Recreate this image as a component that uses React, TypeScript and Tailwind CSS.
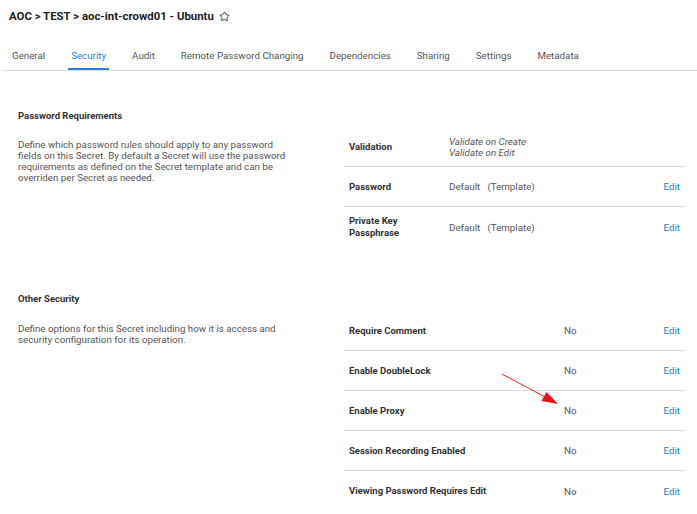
import React from "react";
import { Star } from "lucide-react";

const tabs = ["General", "Security", "Audit", "Remote Password Changing", "Dependencies", "Sharing", "Settings", "Metadata"];

function Row({ label, children, last, labelW, edit = true }: { label: React.ReactNode; children?: React.ReactNode; last?: boolean; labelW: string; edit?: boolean }) {
  return (
    <div className={`flex h-[40px] items-center pl-[5px] pr-[5px] ${last ? "" : "border-b border-[#dcdcdc]"}`}>
      <div className={`${labelW} shrink-0 text-[9.5px] font-bold leading-[12px] text-[#333]`}>{label}</div>
      <div className="flex-1 text-[9.75px] leading-[11px] text-[#555]">{children}</div>
      {edit && <div className="text-[9.75px] leading-[11px] text-[#2a7fd4]">Edit</div>}
    </div>
  );
}

export default function App() {
  return (
    <div className="relative h-[514px] w-[697px] overflow-hidden bg-white font-['Roboto',sans-serif]">
      <div className="flex h-[33px] items-center pl-[9px] text-[11.4px] font-bold text-[#222]">
        <span>AOC &gt; TEST &gt; aoc-int-crowd01 - Ubuntu</span>
        <Star size={11} strokeWidth={2} className="ml-[5px] text-[#333]" />
      </div>
      <div className="ml-[3px] flex h-[38px] gap-[20px] border-b border-[#e0e0e0] pl-[6px]">
        {tabs.map((t) => (
          <div
            key={t}
            className={`flex flex-col justify-end border-b-2 px-[3px] pb-[5px] text-[9.75px] leading-[14px] ${t === "Security" ? "border-[#2a7fd4] text-[#2a7fd4]" : "border-transparent text-[#555]"}`}
          >
            {t}
          </div>
        ))}
      </div>

      <div className="pl-[18px] pr-[12px]">
        <div className="mt-[39px] h-[12px] text-[9.5px] font-bold leading-[12px] text-[#333]">Password Requirements</div>
        <div className="mt-[5px] flex">
          <div className="w-[326px] shrink-0 pt-[12px]">
            <p className="w-[300px] text-[9.75px] leading-[11px] text-[#555]">
              Define which password rules should apply to any password
              <br />
              fields on this Secret. By default a Secret will use the password
              <br />
              requirements as defined on the Secret template and can be
              <br />
              overriden per Secret as needed.
            </p>
          </div>
          <div className="flex-1">
            <Row label="Validation" labelW="w-[100px]" edit={false}>
              <div className="italic">Validate on Create</div>
              <div className="italic">Validate on Edit</div>
            </Row>
            <Row label="Password" labelW="w-[100px]">
              Default&nbsp;&nbsp;&nbsp;(Template)
            </Row>
            <Row label={<>Private Key<br />Passphrase</>} labelW="w-[100px]" last>
              Default&nbsp;&nbsp;&nbsp;(Template)
            </Row>
          </div>
        </div>

        <div className="mt-[46px] h-[12px] text-[9.5px] font-bold leading-[12px] text-[#333]">Other Security</div>
        <div className="mt-[6px] flex">
          <div className="w-[326px] shrink-0 pt-[12px]">
            <p className="w-[300px] text-[9.75px] leading-[11px] text-[#555]">
              Define options for this Secret including how it is access and
              <br />
              security configuration for its operation.
            </p>
          </div>
          <div className="flex-1">
            <Row label="Require Comment" labelW="w-[215px]">No</Row>
            <Row label="Enable DoubleLock" labelW="w-[215px]">No</Row>
            <Row label="Enable Proxy" labelW="w-[215px]">No</Row>
            <Row label="Session Recording Enabled" labelW="w-[215px]">No</Row>
            <Row label="Viewing Password Requires Edit" labelW="w-[215px]" last>No</Row>
          </div>
        </div>
      </div>

      <svg className="pointer-events-none absolute left-0 top-0" width="697" height="514">
        <line x1="502" y1="374" x2="546" y2="397.5" stroke="#ee2222" strokeWidth="1" />
        <polygon points="558,404 541.5,401 546.5,392" fill="#ee1111" />
      </svg>
    </div>
  );
}
